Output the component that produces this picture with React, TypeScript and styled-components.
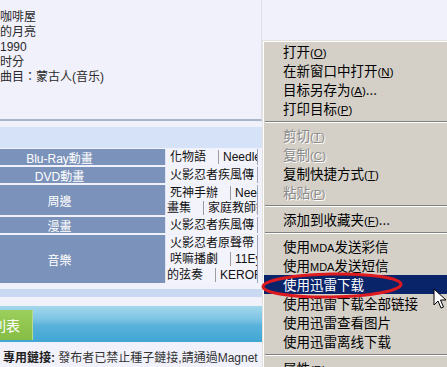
import React from 'react';
import styled, { createGlobalStyle } from 'styled-components';

// #region styled
const GlobalStyle = createGlobalStyle`
  html, body {
    margin: 0;
    padding: 0;
    background: #f1f1fb;
  }
  body {
    font-family: "Liberation Sans", "Noto Sans CJK TC", sans-serif;
  }
`;

const Page = styled.div`
  position: relative;
  width: 447px;
  height: 367px;
  overflow: hidden;
  background: #f1f1fb;
`;

const InfoBox = styled.div`
  box-sizing: border-box;
  height: 121px;
  width: 262px;
  padding-top: 10px;
  border-right: 1px solid #dcdfee;
  border-bottom: 2px solid #a9b5c9;
  font-size: 12px;
  line-height: 15px;
  color: #2a2a2a;
`;

const InfoLine = styled.div`
  white-space: nowrap;
`;

const Band = styled.div`
  margin-top: 6px;
  height: 21px;
  width: 262px;
  background: #d5e2f7;
`;

const Table = styled.div`
  display: grid;
  grid-template-columns: 212px 92px;
  row-gap: 2px;
  margin-top: 1px;
  margin-left: -46px;
`;

const Category = styled.div<{ $h: number }>`
  height: ${(p) => p.$h}px;
  background: #7b93ba;
  color: #fff;
  font-size: 12px;
  display: flex;
  align-items: center;
  justify-content: center;
  border-right: 1px solid #dfe4f0;
`;

const Links = styled.div<{ $h: number }>`
  height: ${(p) => p.$h}px;
  background: #f3f3fb;
  border-right: 1px solid #9aa6bd;
  overflow: hidden;
  display: flex;
  flex-direction: column;
  justify-content: center;
  font-size: 12px;
  color: #111;
`;

const LinkLine = styled.div<{ $wrap?: boolean }>`
  height: 16px;
  line-height: 16px;
  white-space: nowrap;
  overflow: hidden;
  padding-left: ${(p) => (p.$wrap ? 1 : 4)}px;
`;

const LinkItem = styled.span`
  padding-right: 12px;
  & + & {
    border-left: 1px solid #9c9c9c;
    padding-left: 4px;
  }
`;

const Strip = styled.div`
  margin-top: 6px;
  height: 8px;
  width: 262px;
  background: #c9d9f2;
`;

const TabBar = styled.div`
  margin-top: 9px;
  height: 36px;
  width: 262px;
  display: flex;
  align-items: flex-end;
  background: linear-gradient(
    to bottom,
    #a3d7ec 0%,
    #7fc5e4 35%,
    #58b2db 55%,
    #41a6d4 100%
  );
`;

const Tab = styled.div`
  margin-left: -20px;
  margin-bottom: 2px;
  width: 52px;
  height: 30px;
  display: flex;
  align-items: center;
  justify-content: center;
  color: #fff;
  font-size: 14px;
  background: linear-gradient(to bottom, #9ccf5c, #86bd45);
  border-right: 1px solid #b7dc8c;
`;

const Notice = styled.div`
  margin-top: 8px;
  padding-left: 3px;
  font-size: 12px;
  line-height: 16px;
  color: #333;
  white-space: nowrap;
`;

const NoticeLabel = styled.b`
  color: #222;
`;

const Menu = styled.div`
  position: absolute;
  left: 262px;
  top: 40px;
  width: 200px;
  height: 340px;
  box-sizing: border-box;
  padding: 1px 0 0 1px;
  background: #d4d0c8;
  border-top: 1px solid #e4e1db;
  border-left: 1px solid #e4e1db;
  box-shadow: inset 1px 1px 0 #ffffff;
  font-family: "Noto Sans CJK SC", sans-serif;
  font-size: 13.5px;
`;

const MenuItem = styled.div<{ $active?: boolean; $disabled?: boolean }>`
  height: 19px;
  line-height: 19px;
  padding-left: 19px;
  white-space: nowrap;
  background: ${(p) => (p.$active ? '#0a246a' : 'transparent')};
  color: ${(p) => (p.$active ? '#fff' : p.$disabled ? '#8a8a8a' : '#000')};
  text-shadow: ${(p) => (p.$disabled ? '1px 1px 0 #fff' : 'none')};
`;

const Key = styled.span`
  font-family: "Liberation Sans", sans-serif;
  font-size: 11.5px;
  & u {
    text-underline-offset: 1px;
  }
`;

const Latin = styled.span`
  font-family: "Liberation Sans", sans-serif;
  font-size: 11px;
`;

const Separator = styled.div`
  margin: 3px 0 3px 1px;
  border-top: 1px solid #808080;
  border-bottom: 1px solid #ffffff;
`;

const Ellipse = styled.svg`
  position: absolute;
  left: 259px;
  top: 270px;
`;

const Cursor = styled.svg`
  position: absolute;
  left: 433px;
  top: 288px;
`;
// #endregion

const categories = [
  { name: 'Blu-Ray動畫', h: 16, lines: [['化物語', 'Needles']] },
  { name: 'DVD動畫', h: 16, lines: [['火影忍者疾風傳', '十']] },
  {
    name: '周邊',
    h: 30,
    lines: [
      ['死神手辦', 'Needles'],
      ['畫集', '家庭教師錯'],
    ],
  },
  { name: '漫畫', h: 16, lines: [['火影忍者疾風傳']] },
  {
    name: '音樂',
    h: 48,
    lines: [['火影忍者原聲帶'], ['咲嘛播劇', '11Eyes'], ['的弦奏', 'KERORO']],
  },
];

// continuation lines start flush with the cell edge
const wrapped = ['畫集', '的弦奏'];

type Entry =
  | { sep: true }
  | { label: React.ReactNode; key?: string; tail?: string; disabled?: boolean; active?: boolean };

const menu: Entry[] = [
  { label: '打开', key: 'O' },
  { label: '在新窗口中打开', key: 'N' },
  { label: '目标另存为', key: 'A', tail: '...' },
  { label: '打印目标', key: 'P' },
  { sep: true },
  { label: '剪切', key: 'T', disabled: true },
  { label: '复制', key: 'C', disabled: true },
  { label: '复制快捷方式', key: 'T' },
  { label: '粘贴', key: 'P', disabled: true },
  { sep: true },
  { label: '添加到收藏夹', key: 'F', tail: '...' },
  { sep: true },
  { label: <>使用<Latin>MDA</Latin>发送彩信</> },
  { label: <>使用<Latin>MDA</Latin>发送短信</> },
  { label: '使用迅雷下载', active: true },
  { label: '使用迅雷下载全部链接' },
  { label: '使用迅雷查看图片' },
  { label: '使用迅雷离线下载' },
  { sep: true },
  { label: '属性', key: 'R' },
];

const App: React.FC = () => {
  return (
    <Page>
      <GlobalStyle />
      <InfoBox>
        <InfoLine>咖啡屋</InfoLine>
        <InfoLine>的月亮</InfoLine>
        <InfoLine>1990</InfoLine>
        <InfoLine>时分</InfoLine>
        <InfoLine>曲目：蒙古人(音乐)</InfoLine>
      </InfoBox>
      <Band />
      <Table>
        {categories.map((c) => (
          <React.Fragment key={c.name}>
            <Category $h={c.h}>{c.name}</Category>
            <Links $h={c.h}>
              {c.lines.map((line, i) => (
                <LinkLine key={i} $wrap={wrapped.includes(line[0])}>
                  {line.map((t) => (
                    <LinkItem key={t}>{t}</LinkItem>
                  ))}
                </LinkLine>
              ))}
            </Links>
          </React.Fragment>
        ))}
      </Table>
      <Strip />
      <TabBar>
        <Tab>列表</Tab>
      </TabBar>
      <Notice>
        <NoticeLabel>專用鏈接:</NoticeLabel> 發布者已禁止種子鏈接,請通過Magnet
      </Notice>

      <Menu>
        {menu.map((m, i) =>
          'sep' in m ? (
            <Separator key={i} />
          ) : (
            <MenuItem key={i} $active={m.active} $disabled={m.disabled}>
              {m.label}
              {m.key && (
                <Key>
                  (<u>{m.key}</u>)
                </Key>
              )}
              {m.tail}
            </MenuItem>
          ),
        )}
      </Menu>

      <Ellipse width="150" height="32" viewBox="0 0 150 32">
        <ellipse
          cx="73"
          cy="15.5"
          rx="69"
          ry="11.5"
          fill="none"
          stroke="#dc1a1f"
          strokeWidth="3"
          transform="rotate(-1 73 15.5)"
        />
      </Ellipse>

      <Cursor width="14" height="22" viewBox="0 0 14 22">
        <path
          d="M1 1 L1 17 L5 13 L8 20 L10.5 19 L7.5 12 L13 12 Z"
          fill="#fff"
          stroke="#000"
          strokeWidth="1"
        />
      </Cursor>
    </Page>
  );
};

export default App;
